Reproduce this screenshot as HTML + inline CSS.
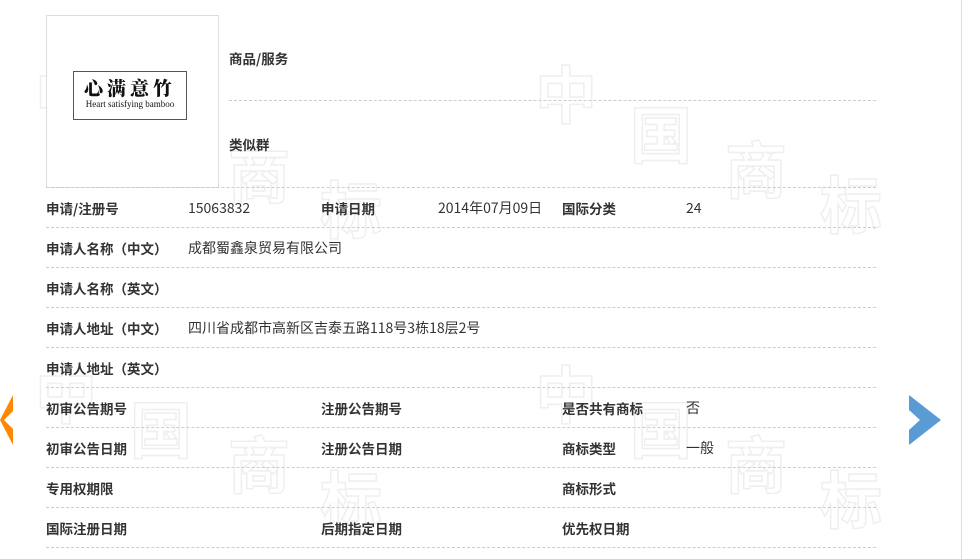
<!DOCTYPE html>
<html><head><meta charset="utf-8"><style>
body{margin:0;width:980px;height:559px;background:#fff;position:relative;overflow:hidden;font-family:"Noto Sans CJK SC","Liberation Sans",sans-serif;font-size:13.5px;color:#333}
.abs{position:absolute}
.wm{position:absolute;font-family:"Noto Sans CJK SC",sans-serif;font-size:62px;font-weight:bold;color:#fff;-webkit-text-stroke:1.5px #efefef;line-height:1}
.line{position:absolute;left:46px;width:830px;border-top:1px dashed #ccc;height:0}
.l{position:absolute;font-weight:bold;white-space:nowrap;line-height:18px}
.v{position:absolute;white-space:nowrap;line-height:18px;font-size:14px}
</style></head><body>
<div class="wm" style="left:35px;top:60px">中</div>
<div class="wm" style="left:535px;top:60px">中</div>
<div class="wm" style="left:630px;top:100px">国</div>
<div class="wm" style="left:725px;top:135px">商</div>
<div class="wm" style="left:820px;top:170px">标</div>
<div class="wm" style="left:228px;top:140px">商</div>
<div class="wm" style="left:320px;top:175px">标</div>
<div class="wm" style="left:35px;top:360px">中</div>
<div class="wm" style="left:130px;top:395px">国</div>
<div class="wm" style="left:228px;top:430px">商</div>
<div class="wm" style="left:320px;top:465px">标</div>
<div class="wm" style="left:535px;top:360px">中</div>
<div class="wm" style="left:630px;top:395px">国</div>
<div class="wm" style="left:725px;top:430px">商</div>
<div class="wm" style="left:820px;top:465px">标</div>
<div class="abs" style="left:961px;top:0;width:1px;height:559px;background:#ddd"></div>
<div class="abs" style="left:46px;top:15px;width:171px;height:171px;border:1px solid #ddd;background:#fff"></div>
<div class="abs" style="left:73px;top:71px;width:112px;height:47px;border:1px solid #555;background:#fff;text-align:center">
<div style="font-family:'Noto Serif CJK SC',serif;font-size:19px;font-weight:900;letter-spacing:4px;line-height:22px;margin-top:5px;color:#111">心满意竹</div>
<div style="font-family:'Liberation Serif',serif;font-size:9px;line-height:11px;color:#111">Heart satisfying bamboo</div></div>
<div class="l" style="left:229px;top:49px">商品/服务</div>
<div class="abs" style="left:229px;top:100px;width:647px;border-top:1px dashed #ccc"></div>
<div class="l" style="left:229px;top:135px">类似群</div>
<div class="line" style="top:187px"></div>
<div class="line" style="top:227px"></div>
<div class="line" style="top:267px"></div>
<div class="line" style="top:307px"></div>
<div class="line" style="top:347px"></div>
<div class="line" style="top:387px"></div>
<div class="line" style="top:427px"></div>
<div class="line" style="top:467px"></div>
<div class="line" style="top:507px"></div>
<div class="line" style="top:547px"></div>
<div class="l" style="left:46px;top:199px">申请/注册号</div><div class="v" style="left:188px;top:199px">15063832</div>
<div class="l" style="left:321px;top:199px">申请日期</div><div class="v" style="left:438px;top:199px">2014年07月09日</div>
<div class="l" style="left:562px;top:199px">国际分类</div><div class="v" style="left:686px;top:199px">24</div>
<div class="l" style="left:46px;top:239px">申请人名称（中文）</div><div class="v" style="left:188px;top:239px">成都蜀鑫泉贸易有限公司</div>
<div class="l" style="left:46px;top:279px">申请人名称（英文）</div>
<div class="l" style="left:46px;top:319px">申请人地址（中文）</div><div class="v" style="left:188px;top:319px">四川省成都市高新区吉泰五路118号3栋18层2号</div>
<div class="l" style="left:46px;top:359px">申请人地址（英文）</div>
<div class="l" style="left:46px;top:399px">初审公告期号</div>
<div class="l" style="left:321px;top:399px">注册公告期号</div>
<div class="l" style="left:562px;top:399px">是否共有商标</div><div class="v" style="left:686px;top:399px">否</div>
<div class="l" style="left:46px;top:439px">初审公告日期</div>
<div class="l" style="left:321px;top:439px">注册公告日期</div>
<div class="l" style="left:562px;top:439px">商标类型</div><div class="v" style="left:686px;top:439px">一般</div>
<div class="l" style="left:46px;top:479px">专用权期限</div>
<div class="l" style="left:562px;top:479px">商标形式</div>
<div class="l" style="left:46px;top:519px">国际注册日期</div>
<div class="l" style="left:321px;top:519px">后期指定日期</div>
<div class="l" style="left:562px;top:519px">优先权日期</div>
<svg class="abs" style="left:0;top:395px" width="14" height="50"><polygon points="13,0 0,25 13,50 13,34 4,25 13,16" fill="#f80"/></svg>
<svg class="abs" style="left:909px;top:395px" width="34" height="50"><polygon points="0,0 32,25 0,50 0,35 11,25 0,15" fill="#5b9bd5"/></svg>
</body></html>
